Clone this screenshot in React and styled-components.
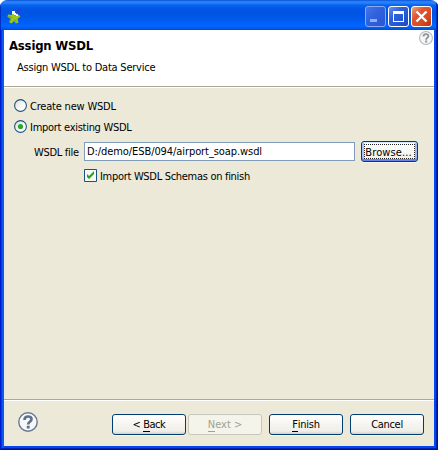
import React from "react";
import styled, { createGlobalStyle, css } from "styled-components";

const GlobalStyle = createGlobalStyle`
  *, *::before, *::after { box-sizing: border-box; }
  body { margin: 0; background: #fff; overflow: hidden; }
  button { margin: 0; }
`;

const Window = styled.div`
  width: 438px;
  height: 450px;
  display: flex;
  flex-direction: column;
  overflow: hidden;
  border-radius: 7px 7px 0 0;
  font-family: "DejaVu Sans Condensed", "DejaVu Sans", sans-serif;
  font-stretch: condensed;
  font-size: 11px;
  line-height: 14px;
  color: #000;
`;

const TitleBar = styled.header`
  height: 30px;
  flex: none;
  display: flex;
  align-items: flex-start;
  padding: 6px 6px 0 6px;
  background: linear-gradient(
    #0044cf 0, #2a7df4 1px, #2582fa 3px, #0864ef 5px, #0056e5 9px,
    #0054e3 15px, #005cf2 21px, #0066ff 26px, #005bef 28px, #0048d8 30px
  );
  box-shadow: inset 1px 0 #0031c4, inset -1px 0 #00179a, inset -2px 0 #0030c0;
`;

const AppIcon = styled.svg`
  width: 16px;
  height: 16px;
  margin-top: 2px;
`;

const WindowControls = styled.div`
  display: flex;
  gap: 2px;
  margin-left: auto;
`;

const controlFill = {
  dim: "linear-gradient(135deg, #4673e6, #2f62df 45%, #2756d4)",
  normal: "linear-gradient(135deg, #7090ec 0, #2e62dc 35%, #2456d4 70%, #1c48be)",
  close: "linear-gradient(135deg, #f0a080 0, #e0552f 35%, #d84a20 70%, #b83010)",
};

const ControlButton = styled.button`
  width: 21px;
  height: 21px;
  padding: 0;
  border: 1px solid ${(p) => (p.$kind === "dim" ? "#8ca9f0" : "#fff")};
  border-radius: 3px;
  background: ${(p) => controlFill[p.$kind]};
  svg { display: block; width: 19px; height: 19px; }
`;

const Frame = styled.div`
  flex: 1;
  min-height: 0;
  display: flex;
  flex-direction: column;
  padding: 0 4px 4px;
  background: #ece9d8;
  box-shadow:
    inset 1px 0 #001bcf,
    inset 0 -1px #00138c,
    inset -1px 0 #00138c,
    inset -2px -2px #0020b0,
    inset 2px 0 #0838e0,
    inset 4px 0 #0a5af2,
    inset -4px -4px #0546ee;
`;

const Banner = styled.section`
  height: 57px;
  flex: none;
  display: flex;
  justify-content: space-between;
  background: #fff;
  border-bottom: 1px solid #aca899;
  padding: 1px 1px 0 5px;
`;

const Title = styled.h1`
  margin: 7px 0 0;
  font-size: 13px;
  line-height: 16px;
  font-weight: bold;
  letter-spacing: -0.2px;
`;

const Text = styled.span`
  white-space: pre;
  letter-spacing: ${(p) => p.$track || 0}px;
  u { text-decoration: none; border-bottom: 1px solid currentColor; display: inline-block; line-height: 12px; }
`;

const Subtitle = styled(Text)`
  display: block;
  margin: 7px 0 0 8px;
`;

const Content = styled.main`
  flex: 1;
  min-height: 0;
  border-top: 1px solid #fff;
  border-bottom: 1px solid #aca899;
  padding: 11px 16px 0 10px;
`;

const Option = styled.label`
  display: flex;
  gap: 3px;
  height: 13px;
  align-items: center;
  margin-bottom: 8px;
  span { padding-top: 2px; }
`;

const Mark = styled.svg`
  width: 13px;
  height: 13px;
  flex: none;
`;

const FileRow = styled.div`
  display: flex;
  align-items: center;
  height: 21px;
`;

const FieldLabel = styled.div`
  width: 70px;
  padding: 2px 0 0 20px;
`;

const PathField = styled.div`
  width: 271px;
  height: 19px;
  border: 1px solid #7f9db9;
  background: #fff;
  padding: 2px 2px 0;
  margin-right: 6px;
`;

const CheckRow = styled(Option)`
  margin: 7px 0 0 70px;
`;

const Button = styled.button`
  width: ${(p) => p.$width || 74}px;
  height: 21px;
  padding: 0;
  border: 1px solid #003c74;
  border-radius: 3px;
  background: linear-gradient(#fff, #f6f5f1 45%, #efeee8 85%, #d8d0c4);
  box-shadow: 0 1px #f8f6ec;
  font: inherit;
  color: inherit;
  display: flex;
  align-items: center;
  justify-content: center;
  ${(p) => p.$focused && css`
    background: linear-gradient(#fff, #f4f3ee 80%, #e4e2dc);
    box-shadow: inset 0 1px #cee7ff, inset 0 -2px #6982ee, inset 2px 0 #a9c3f4, inset -2px 0 #a0b8f0, 0 1px #f8f6ec;
    outline: 1px dotted #222;
    outline-offset: -4px;
    padding: 2px 2px 0 0;
  `}
  ${(p) => p.disabled && css`
    border-color: #c9c7ba;
    background: #f5f4ea;
    color: #a1a192;
    box-shadow: none;
  `}
`;

const Footer = styled.footer`
  height: 46px;
  flex: none;
  display: flex;
  padding: 13px 10px 0 14px;
  border-top: 1px solid #fff;
`;

const HelpMark = styled.svg`
  width: ${(p) => p.$size}px;
  height: ${(p) => p.$size}px;
  flex: none;
`;

const FooterHelp = styled.div`
  margin-top: -2px;
`;

const Actions = styled.div`
  display: flex;
  margin-left: auto;
  gap: 7px;
`;

const Pager = styled.div`
  display: flex;
  gap: 2px;
`;

function Help({ size, ring, ink, weight }) {
  return (
    <HelpMark $size={size} viewBox="0 0 20 20" fill="none">
      <circle cx="10" cy="10" r="9.2" fill="#f6f7f8" stroke={ring} strokeWidth={weight} />
      <path d="M6.5 7.9C6.5 5.3 8 4.5 10.1 4.5c2.1 0 3.4 1 3.4 2.8 0 2.5-3.3 2.4-3.3 5.1" stroke={ink} strokeWidth="2.7" />
      <path d="M8.8 13.7h2.9v2.7H8.8z" fill={ink} />
    </HelpMark>
  );
}

function Radio({ checked }) {
  return (
    <Mark viewBox="0 0 13 13">
      <defs>
        <linearGradient id="radioFill" x1="0" y1="0" x2="1" y2="1">
          <stop offset="0" stopColor="#dcdcd7" />
          <stop offset=".7" stopColor="#fff" />
        </linearGradient>
      </defs>
      <circle cx="6.5" cy="6.5" r="5.9" fill="url(#radioFill)" stroke="#1d5281" strokeWidth="1.1" />
      {checked && <circle cx="6.5" cy="6.5" r="2.6" fill="#29a829" />}
    </Mark>
  );
}

export default function App() {
  return (
    <>
      <GlobalStyle />
      <Window>
        <TitleBar>
          <AppIcon viewBox="0 0 16 16">
            <path d="M6 3h3v4l4 0 1.5 1.5-3 2.5 1 3.500-2.500 1-2-2.500-2.500 2.500-2-1 1-4-3-1.500 .5-2.500L6 7z" fill="#9fc61e" />
            <path d="M3.500 14l1-3M10.500 14l-2-2.500M2.500 8.500l3.500 1" stroke="#729f20" />
            <path d="M6 3h3v2h3v3H8V6H6z" fill="#fff" />
            <path d="M8 7h2v1H8z" fill="#d98a26" />
            <path d="M10.500 6l3.500-4.500M11.500 2.500l1.500 1.500" stroke="#4930bd" strokeWidth="1.600" fill="none" />
          </AppIcon>
          <WindowControls>
            <ControlButton $kind="dim" aria-label="Minimize">
              <svg viewBox="0 0 19 19"><path d="M4 12h7v3H4z" fill="#94aef0" /></svg>
            </ControlButton>
            <ControlButton $kind="normal" aria-label="Maximize">
              <svg viewBox="0 0 19 19"><path d="M4 4h11v11H4zM5 7v7h9V7z" fill="#fff" fillRule="evenodd" /></svg>
            </ControlButton>
            <ControlButton $kind="close" aria-label="Close">
              <svg viewBox="0 0 19 19"><path d="M4.500 4.500l10 10M14.500 4.500l-10 10" stroke="#fff" strokeWidth="2.300" /></svg>
            </ControlButton>
          </WindowControls>
        </TitleBar>
        <Frame>
          <Banner>
            <div>
              <Title>Assign WSDL</Title>
              <Subtitle $track={-0.22}>Assign WSDL to Data Service</Subtitle>
            </div>
            <Help size={14} ring="#b4b6b9" ink="#8e9499" weight={1.5} />
          </Banner>
          <Content>
            <Option><Radio /><Text $track={-0.2}>Create new WSDL</Text></Option>
            <Option><Radio checked /><Text $track={-0.28}>Import existing WSDL</Text></Option>
            <FileRow>
              <FieldLabel><Text $track={-0.3}>WSDL file</Text></FieldLabel>
              <PathField><Text $track={-0.08}>D:/demo/ESB/094/airport_soap.wsdl</Text></PathField>
              <Button $width={57} $focused><Text $track={0.1}>Browse...</Text></Button>
            </FileRow>
            <CheckRow>
              <Mark viewBox="0 0 13 13">
                <path d="M.5.5h12v12H.5z" fill="#f7f7f4" stroke="#1c5180" />
                <path d="M3 5v3l2 2 5-5V2L5 7z" fill="#21a121" />
              </Mark>
              <Text $track={-0.3}>Import WSDL Schemas on finish</Text>
            </CheckRow>
          </Content>
          <Footer>
            <FooterHelp><Help size={20} ring="#667994" ink="#60718c" weight={1.4} /></FooterHelp>
            <Actions>
              <Pager>
                <Button><Text $track={-0.45}>{"< "}<u>B</u>ack</Text></Button>
                <Button disabled><Text>{""}<u>N</u>{"ext >"}</Text></Button>
              </Pager>
              <Button><Text $track={-0.25}><u>F</u>inish</Text></Button>
              <Button><Text $track={-0.3}>Cancel</Text></Button>
            </Actions>
          </Footer>
        </Frame>
      </Window>
    </>
  );
}
